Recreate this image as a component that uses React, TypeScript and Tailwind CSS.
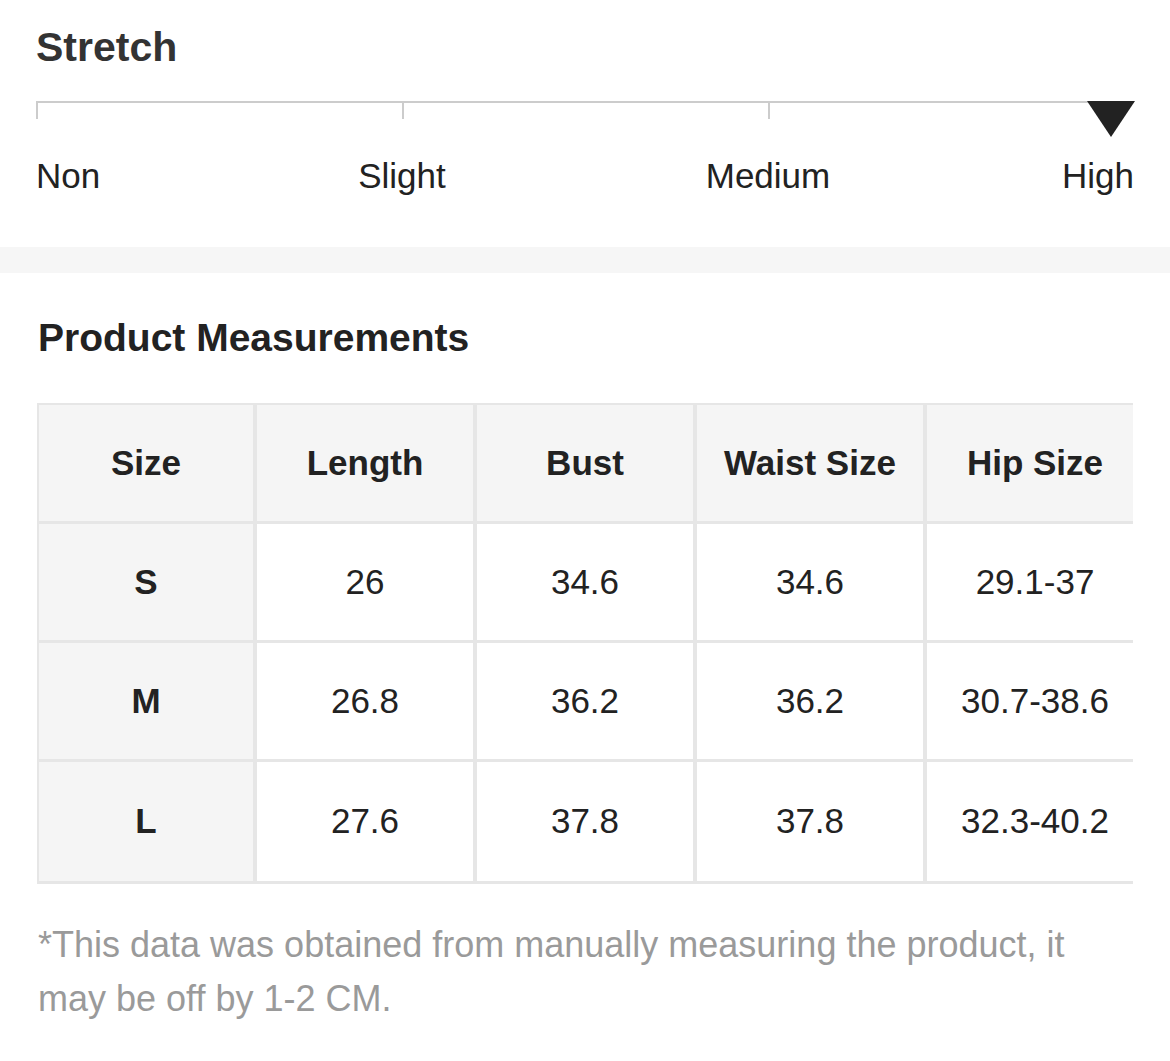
const headers = ['Size', 'Length', 'Bust', 'Waist Size', 'Hip Size'];

const rows = [
  ['S', '26', '34.6', '34.6', '29.1-37'],
  ['M', '26.8', '36.2', '36.2', '30.7-38.6'],
  ['L', '27.6', '37.8', '37.8', '32.3-40.2'],
];

const levels = ['Non', 'Slight', 'Medium', 'High'];

function StretchScale() {
  return (
    <section className="bg-white pl-[36px] pr-[36px] pt-[23px] pb-[51px]">
      <h2 className="text-[41px] leading-[48px] font-bold text-[#333]">Stretch</h2>

      {/* scale line with ticks */}
      <div className="relative mt-[30px]">
        <div className="grid grid-cols-3">
          <div className="h-[18px] border-t-2 border-l-2 border-[#cccccc]" />
          <div className="h-[18px] border-t-2 border-l-2 border-[#cccccc]" />
          <div className="h-[18px] border-t-2 border-l-2 border-[#cccccc]" />
        </div>
        <div className="absolute right-[-1px] top-0 h-0 w-0 border-l-[24px] border-r-[24px] border-t-[36px] border-l-transparent border-r-transparent border-t-[#222]" />
      </div>

      <div className="mt-[37px] grid grid-cols-6 text-[35px] leading-[40px] text-[#222]">
        <span className="text-left">{levels[0]}</span>
        <span className="col-span-2 text-center">{levels[1]}</span>
        <span className="col-span-2 text-center">{levels[2]}</span>
        <span className="text-right">{levels[3]}</span>
      </div>
    </section>
  );
}

function Cell({ children, head, first, last }: { children: string; head?: boolean; first?: boolean; last?: boolean }) {
  return (
    <div
      className={
        'flex items-center justify-center border-r-4 border-b-[3px] border-[#e6e6e6] text-[35px] ' +
        (last ? 'h-[122px] ' : 'h-[119px] ') +
        (head || first ? 'bg-[#f5f5f5] font-bold ' : 'bg-white ') +
        'text-[#222]'
      }
    >
      {children}
    </div>
  );
}

function Measurements() {
  return (
    <section className="bg-white pl-[37px] pr-[37px] pt-[42px] pb-[50px]">
      <h2 className="pl-[1px] text-[39px] leading-[45px] font-bold text-[#222]">Product Measurements</h2>

      <div className="mt-[43px] w-[1096px] overflow-hidden">
        <div className="grid w-[1110px] grid-cols-[218px_220px_220px_230px_220px] border-t-2 border-l-2 border-[#e6e6e6]">
          {headers.map((h) => (
            <Cell key={h} head>
              {h}
            </Cell>
          ))}
          {rows.map((r, ri) =>
            r.map((v, i) => (
              <Cell key={r[0] + i} first={i === 0} last={ri === rows.length - 1}>
                {v}
              </Cell>
            ))
          )}
        </div>
      </div>

      <p className="mt-[34px] w-[1092px] pl-[1px] text-[36px] leading-[54px] text-[#9a9a9a]">
        *This data was obtained from manually measuring the product, it may be off by 1-2 CM.
      </p>
    </section>
  );
}

export default function App() {
  return (
    <div className="min-h-screen bg-white" style={{ fontFamily: '"Liberation Sans", Arial, sans-serif' }}>
      <StretchScale />
      <div className="h-[26px] bg-[#f6f6f6]" />
      <Measurements />
    </div>
  );
}
